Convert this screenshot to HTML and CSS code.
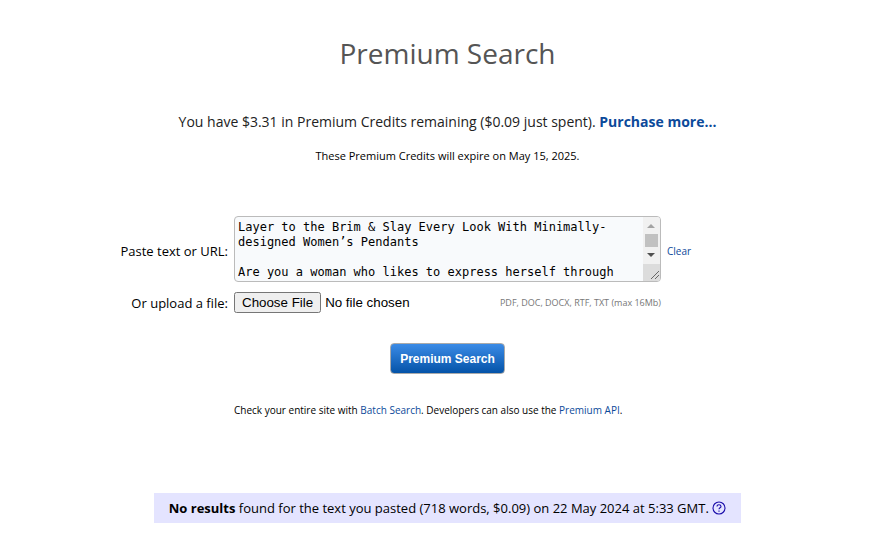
FILE: index.html
```
<!DOCTYPE html>
<html lang="en">
<head>
  <meta charset="UTF-8">
  <meta name="viewport" content="width=device-width, initial-scale=1.0">
  <title>Premium Search</title>

  <link rel="stylesheet" href="styles.css">
</head>

<body>
  <main class="page">
    <h1>Premium Search</h1>

    <p class="credits">You have $3.31 in Premium Credits remaining ($0.09 just spent). <a href="#">Purchase more...</a></p>
    <p class="expiry">These Premium Credits will expire on May 15, 2025.</p>

    <form class="search-form">
      <div class="form-row text-row">
        <label for="text">Paste text or URL:</label>
        <div class="text-box">
          <textarea id="text" name="text">Layer to the Brim &amp; Slay Every Look With Minimally-designed Women’s Pendants

Are you a woman who likes to express herself through</textarea>
          <svg class="scrollbar" width="17" height="64" viewBox="0 0 17 64" aria-hidden="true">
            <rect width="17" height="47" fill="#f1f1f1"/>
            <path d="M4 11h8L8 7z" fill="#a3a3a3"/>
            <rect x="2" y="17" width="13" height="13" fill="#c1c1c1"/>
            <path d="M4 36h8l-4 4z" fill="#505050"/>
            <rect y="47" width="17" height="17" fill="#dcdcdc"/>
            <path d="M8 62l8-8M12 62l4-4" stroke="#666" fill="none"/>
          </svg>
        </div>
        <a class="clear" href="#">Clear</a>
      </div>

      <div class="form-row">
        <label for="file">Or upload a file:</label>
        <div class="file-box">
          <input type="file" id="file" name="file">
          <span class="formats">PDF, DOC, DOCX, RTF, TXT (max 16Mb)</span>
        </div>
      </div>

      <button type="submit" class="btn">Premium Search</button>

      <div class="form-row">
        <p class="hint">Check your entire site with <a href="#">Batch Search</a>. Developers can also use the <a href="#">Premium API</a>.</p>
      </div>
    </form>

    <div class="results">
      <b>No results</b> found for the text you pasted (718 words, $0.09) on 22 May 2024 at 5:33 GMT.
      <a class="help" href="#" aria-label="Help">
        <svg width="14" height="14" viewBox="0 0 14 14" fill="none" stroke="#1a0dab">
          <circle cx="7" cy="7" r="6" stroke-width="1.1"/>
          <path d="M5 5.6C5 4.3 5.9 3.7 7 3.7s2 .7 2 1.7c0 1.3-2 1.5-2 2.9M7 9.4v1.3" stroke-width="1.1"/>
        </svg>
      </a>
    </div>
  </main>
</body>
</html>
```
FILE: styles.css
```
body {
  font-family: "Open Sans", sans-serif;
  font-size: 13px;
  line-height: 20px;
  color: #000;
  background-color: #fff;
  margin: 0;
  padding: 0 0 0 26px;
}

a {
  color: #0c4a9a;
  text-decoration: none;
}

.page {
  display: flex;
  flex-direction: column;
  align-items: center;
  padding: 33px 0 20px;
}

h1 {
  margin: 0 0 39px;
  font-size: 28px;
  font-weight: 400;
  line-height: 40px;
  color: #555;
}

.credits {
  margin: 0 0 14px;
  font-size: 14px;
  color: #222;
}

.credits a {
  font-weight: 700;
}

.expiry {
  margin: 0 0 50px;
  font-size: 11px;
}

.search-form {
  width: 100%;
  display: flex;
  flex-direction: column;
  align-items: center;
  gap: 10px;
}

.form-row {
  width: 100%;
  display: grid;
  grid-template-columns: 1fr 427px 1fr;
  column-gap: 6px;
  align-items: center;
}

.form-row label {
  text-align: right;
}

.text-row label,
.text-row .clear {
  padding-top: 4px;
}

.text-box {
  position: relative;
  height: 66px;
}

textarea {
  display: block;
  box-sizing: border-box;
  width: 100%;
  height: 66px;
  padding: 3px 20px 1px 3px;
  border: 1px solid #bbb;
  border-radius: 4px;
  background: #f8fafc;
  color: #000;
  font: 12px/15px "DejaVu Sans Mono", monospace;
  overflow: hidden;
  resize: none;
}

/* scroll buttons and resize corner over the text box */
.scrollbar {
  position: absolute;
  top: 1px;
  right: 1px;
  border-radius: 0 3px 3px 0;
}

.clear {
  font-size: 10px;
}

.file-box {
  display: flex;
  justify-content: space-between;
  align-items: center;
}

.file-box input {
  width: 200px;
  font-family: "Liberation Sans", Arial, sans-serif;
}

.formats {
  font-size: 9px;
  color: #777;
}

.btn {
  height: 31px;
  margin-top: 20px;
  padding: 0 9px;
  border: 1px solid #aaa;
  border-radius: 4px;
  background: linear-gradient(#3b8be6, #0453a8);
  color: #fff;
  font: 700 12px "Liberation Sans", Arial, sans-serif;
}

.hint {
  grid-column: 2;
  margin: 16px 0 73px;
  font-size: 10px;
  white-space: nowrap;
}

.results {
  padding: 5px 15px;
  background: #e4e4ff;
}

.help svg {
  vertical-align: -2px;
}
```
